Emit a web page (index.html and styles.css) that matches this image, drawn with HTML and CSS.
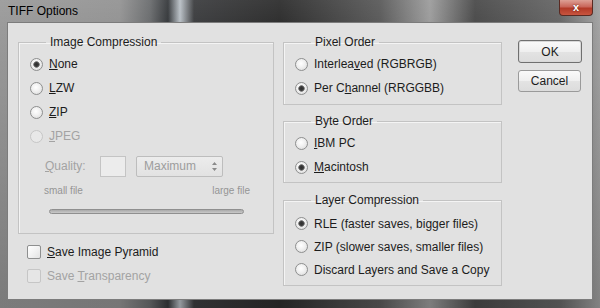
FILE: index.html
```html
<!DOCTYPE html>
<html lang="en">
<head>
    <meta charset="UTF-8">
    <title>TIFF Options</title>
    <link rel="stylesheet" href="styles.css">
</head>
<body>
    <div class="window">
        <div class="titlebar">
            <span class="title">TIFF Options</span>
            <button class="closeBtn">x</button>
        </div>

        <div class="client">
            <!-- left column -->
            <div class="leftCol">
                <fieldset class="group imageGroup">
                    <legend>Image Compression</legend>
                    <label class="row"><input type="radio" name="comp" checked><span><u>N</u>one</span></label>
                    <label class="row"><input type="radio" name="comp"><span><u>L</u>ZW</span></label>
                    <label class="row"><input type="radio" name="comp"><span><u>Z</u>IP</span></label>
                    <label class="row disabled"><input type="radio" name="comp" disabled><span><u>J</u>PEG</span></label>

                    <div class="qualityRow">
                        <span class="qualityLabel"><u>Q</u>uality:</span>
                        <span class="qualityBox"></span>
                        <span class="qualitySelect">
                            <span>Maximum</span>
                            <svg class="spin" width="5" height="9" viewBox="0 0 5 9">
                                <path d="M2.5 0 L5 3 L0 3 Z M0 6 L5 6 L2.5 9 Z" fill="#8a8a8a"/>
                            </svg>
                        </span>
                    </div>
                    <div class="sizeRow">
                        <span>small file</span>
                        <span>large file</span>
                    </div>
                    <div class="slider"></div>
                </fieldset>

                <label class="row checkRow firstCheck"><input type="checkbox"><span><u>S</u>ave Image Pyramid</span></label>
                <label class="row checkRow disabled"><input type="checkbox" disabled><span>Save <u>T</u>ransparency</span></label>
            </div>

            <!-- right column -->
            <div class="rightCol">
                <fieldset class="group pixelGroup">
                    <legend>Pixel Order</legend>
                    <label class="row"><input type="radio" name="pixel"><span>Interlea<u>v</u>ed (RGBRGB)</span></label>
                    <label class="row"><input type="radio" name="pixel" checked><span>Per C<u>h</u>annel (RRGGBB)</span></label>
                </fieldset>

                <fieldset class="group byteGroup">
                    <legend>Byte Order</legend>
                    <label class="row"><input type="radio" name="byte"><span><u>I</u>BM PC</span></label>
                    <label class="row"><input type="radio" name="byte" checked><span><u>M</u>acintosh</span></label>
                </fieldset>

                <fieldset class="group layerGroup">
                    <legend>Layer Compression</legend>
                    <label class="row"><input type="radio" name="layer" checked><span>RLE (faster saves, bigger files)</span></label>
                    <label class="row"><input type="radio" name="layer"><span>ZIP (slower saves, smaller files)</span></label>
                    <label class="row"><input type="radio" name="layer"><span>Discard Layers and Save a Copy</span></label>
                </fieldset>
            </div>

            <!-- buttons -->
            <div class="buttons">
                <button class="dlgBtn defaultBtn">OK</button>
                <button class="dlgBtn">Cancel</button>
            </div>
        </div>
    </div>
</body>
</html>
```

FILE: styles.css
```css
body {
    margin: 0;
    font-family: "Liberation Sans", Arial, sans-serif;
    font-size: 12px;
    color: #1c1c1c;
    background-color: #2e2e2e;
}

.window {
    width: 600px;
    height: 308px;
    box-sizing: border-box;
    padding: 0 7px 8px 7px;
    display: flex;
    flex-direction: column;
    background:
        linear-gradient(180deg, rgba(255,255,255,0.06) 0, rgba(0,0,0,0) 30px, rgba(0,0,0,0.2) 300px),
        linear-gradient(90deg, #9a9a9a 0, #939393 120px, #6a6c6e 150px, #35383b 168px, #b9c0c6 180px, #3c3d3f 194px, #2d2d2d 280px, #5a5a5a 380px, #9c9c9c 430px, #4a4a4a 475px, #666 560px, #a3a3a3 600px);
}

.titlebar {
    height: 22px;
    display: flex;
    align-items: flex-start;
}

.title {
    margin-top: 4px;
    margin-left: 1px;
    color: #000;
    font-size: 12px;
}

.closeBtn {
    margin-left: auto;
    width: 34px;
    height: 16px;
    padding: 0;
    border: 1px solid #5a2a22;
    border-top: none;
    border-radius: 0 0 4px 4px;
    background: linear-gradient(180deg, #dda095 0, #c9665a 45%, #b23a28 55%, #c8553f 100%);
    color: #fff;
    font-family: "Liberation Sans", Arial, sans-serif;
    font-size: 11px;
    font-weight: bold;
    line-height: 13px;
    text-shadow: 0 0 2px #5a1a10;
}

.client {
    flex: 1;
    display: flex;
    padding: 12px 0 0 10px;
    background-color: #e1e1e1;
    border: 1px solid #7c7c7c;
}

.group {
    margin: 0;
    padding: 3px 0 0 11px;
    border: 1px solid #c3c3c3;
    box-shadow: inset 1px 1px 0 #f4f4f4;
}

.group legend {
    margin-left: 16px;
    padding: 0 4px;
    line-height: 14px;
    color: #1c1c1c;
}

.leftCol {
    width: 256px;
}

.imageGroup {
    padding-bottom: 19px;
}

.row {
    height: 24px;
    display: flex;
    align-items: center;
    gap: 6px;
}

.row u {
    text-decoration-thickness: 1px;
}

.disabled {
    color: #a3a3a3;
}

input[type="radio"] {
    appearance: none;
    margin: 0;
    width: 13px;
    height: 13px;
    border: 1px solid #8e8f8f;
    border-radius: 50%;
    background: radial-gradient(circle at 45% 40%, #ffffff 0, #f0f0f0 45%, #d6d6d6 100%);
}

input[type="radio"]:checked {
    background:
        radial-gradient(circle, #2e2e2e 0, #3c3c3c 2px, #8a8a8a 3px, rgba(0,0,0,0) 3.6px),
        radial-gradient(circle at 45% 40%, #ffffff 0, #f0f0f0 45%, #d6d6d6 100%);
}

input[type="radio"]:disabled {
    border-color: #c6c6c6;
    background: #e8e8e8;
}

input[type="checkbox"] {
    appearance: none;
    margin: 0;
    width: 14px;
    height: 14px;
    border: 1px solid #8e8f8f;
    border-radius: 2px;
    background: linear-gradient(135deg, #ffffff 0, #f2f2f2 50%, #e2e2e2 100%);
}

input[type="checkbox"]:disabled {
    border-color: #c6c6c6;
    background: #e6e6e6;
}

.qualityRow {
    margin-top: 7px;
    padding-left: 15px;
    height: 22px;
    display: flex;
    align-items: center;
    color: #a3a3a3;
}

.qualityLabel {
    width: 55px;
}

.qualityBox {
    width: 24px;
    height: 19px;
    border: 1px solid #c4c4c4;
    background-color: #ececec;
}

.qualitySelect {
    margin-left: 10px;
    width: 73px;
    height: 19px;
    padding: 0 5px 0 7px;
    display: flex;
    align-items: center;
    justify-content: space-between;
    border: 1px solid #bdbdbd;
    border-radius: 2px;
    background: linear-gradient(180deg, #ececec, #e2e2e2);
    color: #9d9d9d;
}

.spin {
    display: block;
}

.sizeRow {
    margin-top: 8px;
    padding-left: 14px;
    width: 206px;
    height: 14px;
    display: flex;
    justify-content: space-between;
    font-size: 10px;
    color: #959595;
}

.slider {
    margin-top: 10px;
    margin-left: 19px;
    width: 195px;
    height: 5px;
    box-sizing: border-box;
    border: 1px solid #8f8f8f;
    border-radius: 3px;
    background: linear-gradient(180deg, #a9a9a9, #c9c9c9);
}

.checkRow {
    padding-left: 9px;
}

.firstCheck {
    margin-top: 6px;
}

.rightCol {
    margin-left: 9px;
    width: 219px;
    display: flex;
    flex-direction: column;
}

.pixelGroup {
    padding-bottom: 4px;
}

.byteGroup {
    margin-top: 9px;
    padding-bottom: 3px;
}

.layerGroup {
    margin-top: 10px;
    padding-top: 5px;
    padding-bottom: 4px;
}

.layerGroup .row {
    height: 23px;
}

.buttons {
    margin-left: 16px;
    display: flex;
    flex-direction: column;
    gap: 7px;
    padding-top: 5px;
}

.dlgBtn {
    width: 63px;
    height: 22px;
    padding: 0;
    border: 1px solid #9a9a9a;
    border-radius: 3px;
    background: linear-gradient(180deg, #fafafa 0, #efefef 50%, #e3e3e3 51%, #dcdcdc 100%);
    font-family: "Liberation Sans", Arial, sans-serif;
    font-size: 12px;
    color: #1c1c1c;
}

.defaultBtn {
    width: 64px;
    height: 23px;
    border-color: #6f6f6f;
    box-shadow: inset 0 0 0 1px #d8d8d8;
}
```
